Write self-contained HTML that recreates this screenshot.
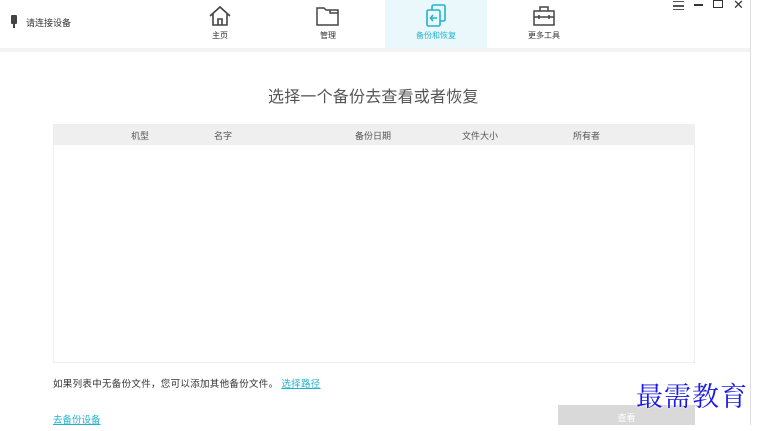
<!DOCTYPE html>
<html><head><meta charset="utf-8"><style>
*{margin:0;padding:0;box-sizing:border-box}
body{width:757px;height:425px;overflow:hidden;background:#fff;font-family:"Liberation Sans","Noto Sans CJK SC",sans-serif;position:relative;color:#333}
.a{position:absolute}
.t{font-size:8px;color:#333}
</style></head><body>
<div class="a" style="left:0;top:0;width:757px;height:48px;background:#fff"></div>
<div class="a" style="left:0;top:48px;width:750px;height:4px;background:#f3f3f3"></div>
<div class="a" style="left:750px;top:0;width:1px;height:425px;background:#ddd"></div>
<div class="a" style="left:11px;top:15px;width:6px;height:9px;background:#444;border-radius:1px"></div>
<div class="a" style="left:13px;top:24px;width:2px;height:4px;background:#444"></div>
<div class="a t" style="left:26px;top:16px;font-size:9px">请连接设备</div>
<svg class="a" style="left:208px;top:5px" width="24" height="22" viewBox="0 0 24 22"><path d="M2 11 L12 2 L22 11 M5 9 V20 H19 V9 M10 20 V14 H14 V20" fill="none" stroke="#444" stroke-width="1.6"/></svg>
<div class="a t" style="left:212px;top:30px">主页</div>
<svg class="a" style="left:316px;top:5px" width="24" height="22" viewBox="0 0 24 22"><path d="M1 3 H8 L10 5 H22 V20 H1 Z M14 5 V8 H22" fill="none" stroke="#444" stroke-width="1.5"/></svg>
<div class="a t" style="left:320px;top:30px">管理</div>
<div class="a" style="left:385px;top:0;width:102px;height:48px;background:#eaf8fb"></div>
<svg class="a" style="left:425px;top:4px" width="22" height="24" viewBox="0 0 22 24"><rect x="7" y="1" width="13" height="16" rx="1.5" fill="none" stroke="#22b3cc" stroke-width="1.6"/><rect x="2" y="6" width="13" height="16" rx="1.5" fill="#eaf8fb" stroke="#22b3cc" stroke-width="1.6"/><path d="M12 14 H6 M8 11 L5.5 14 L8 17" fill="none" stroke="#22b3cc" stroke-width="1.6"/></svg>
<div class="a t" style="left:416px;top:30px;color:#22b3cc">备份和恢复</div>
<svg class="a" style="left:532px;top:5px" width="24" height="22" viewBox="0 0 24 22"><path d="M2 6 H22 V20 H2 Z M8 6 V2 H16 V6 M2 12 H22 M7 10 V14 M17 10 V14" fill="none" stroke="#444" stroke-width="1.5"/></svg>
<div class="a t" style="left:528px;top:30px">更多工具</div>
<div class="a" style="left:673px;top:1px;width:11px;height:9px;border-top:1.5px solid #555;border-bottom:1.5px solid #555"></div>
<div class="a" style="left:673px;top:5px;width:11px;height:1.5px;background:#555"></div>
<div class="a" style="left:694px;top:4px;width:9px;height:2px;background:#333"></div>
<div class="a" style="left:713px;top:0px;width:10px;height:8px;border:1.5px solid #333"></div>
<div class="a" style="left:733px;top:-3px;font-size:13px;color:#333">✕</div>
<div class="a" style="left:268px;top:83px;font-size:16px;color:#555;letter-spacing:0.2px">选择一个备份去查看或者恢复</div>
<div class="a" style="left:53px;top:124px;width:642px;height:239px;border:1px solid #eee"></div>
<div class="a" style="left:53px;top:124px;width:642px;height:21px;background:#efefef"></div>
<div class="a t" style="left:131px;top:129px;font-size:9px;color:#555">机型</div>
<div class="a t" style="left:214px;top:129px;font-size:9px;color:#555">名字</div>
<div class="a t" style="left:355px;top:129px;font-size:9px;color:#555">备份日期</div>
<div class="a t" style="left:462px;top:129px;font-size:9px;color:#555">文件大小</div>
<div class="a t" style="left:573px;top:129px;font-size:9px;color:#555">所有者</div>
<div class="a t" style="left:53px;top:376px;font-size:9.5px;letter-spacing:0.3px">如果列表中无备份文件，您可以添加其他备份文件。 <span style="color:#22b3cc;text-decoration:underline">选择路径</span></div>
<div class="a t" style="left:53px;top:412px;font-size:9.5px;color:#22b3cc;text-decoration:underline">去备份设备</div>
<div class="a" style="left:558px;top:405px;width:137px;height:20px;background:#d9d9d9;color:#fff;font-size:9px;text-align:center;line-height:26px">查看</div>
<div class="a" style="left:636px;top:375px;font-family:'Noto Serif CJK SC',serif;font-size:27px;color:#1a1ae0;letter-spacing:1px;text-shadow:0 0 2px #fff,0 0 2px #fff">最需教育</div>
</body></html>
